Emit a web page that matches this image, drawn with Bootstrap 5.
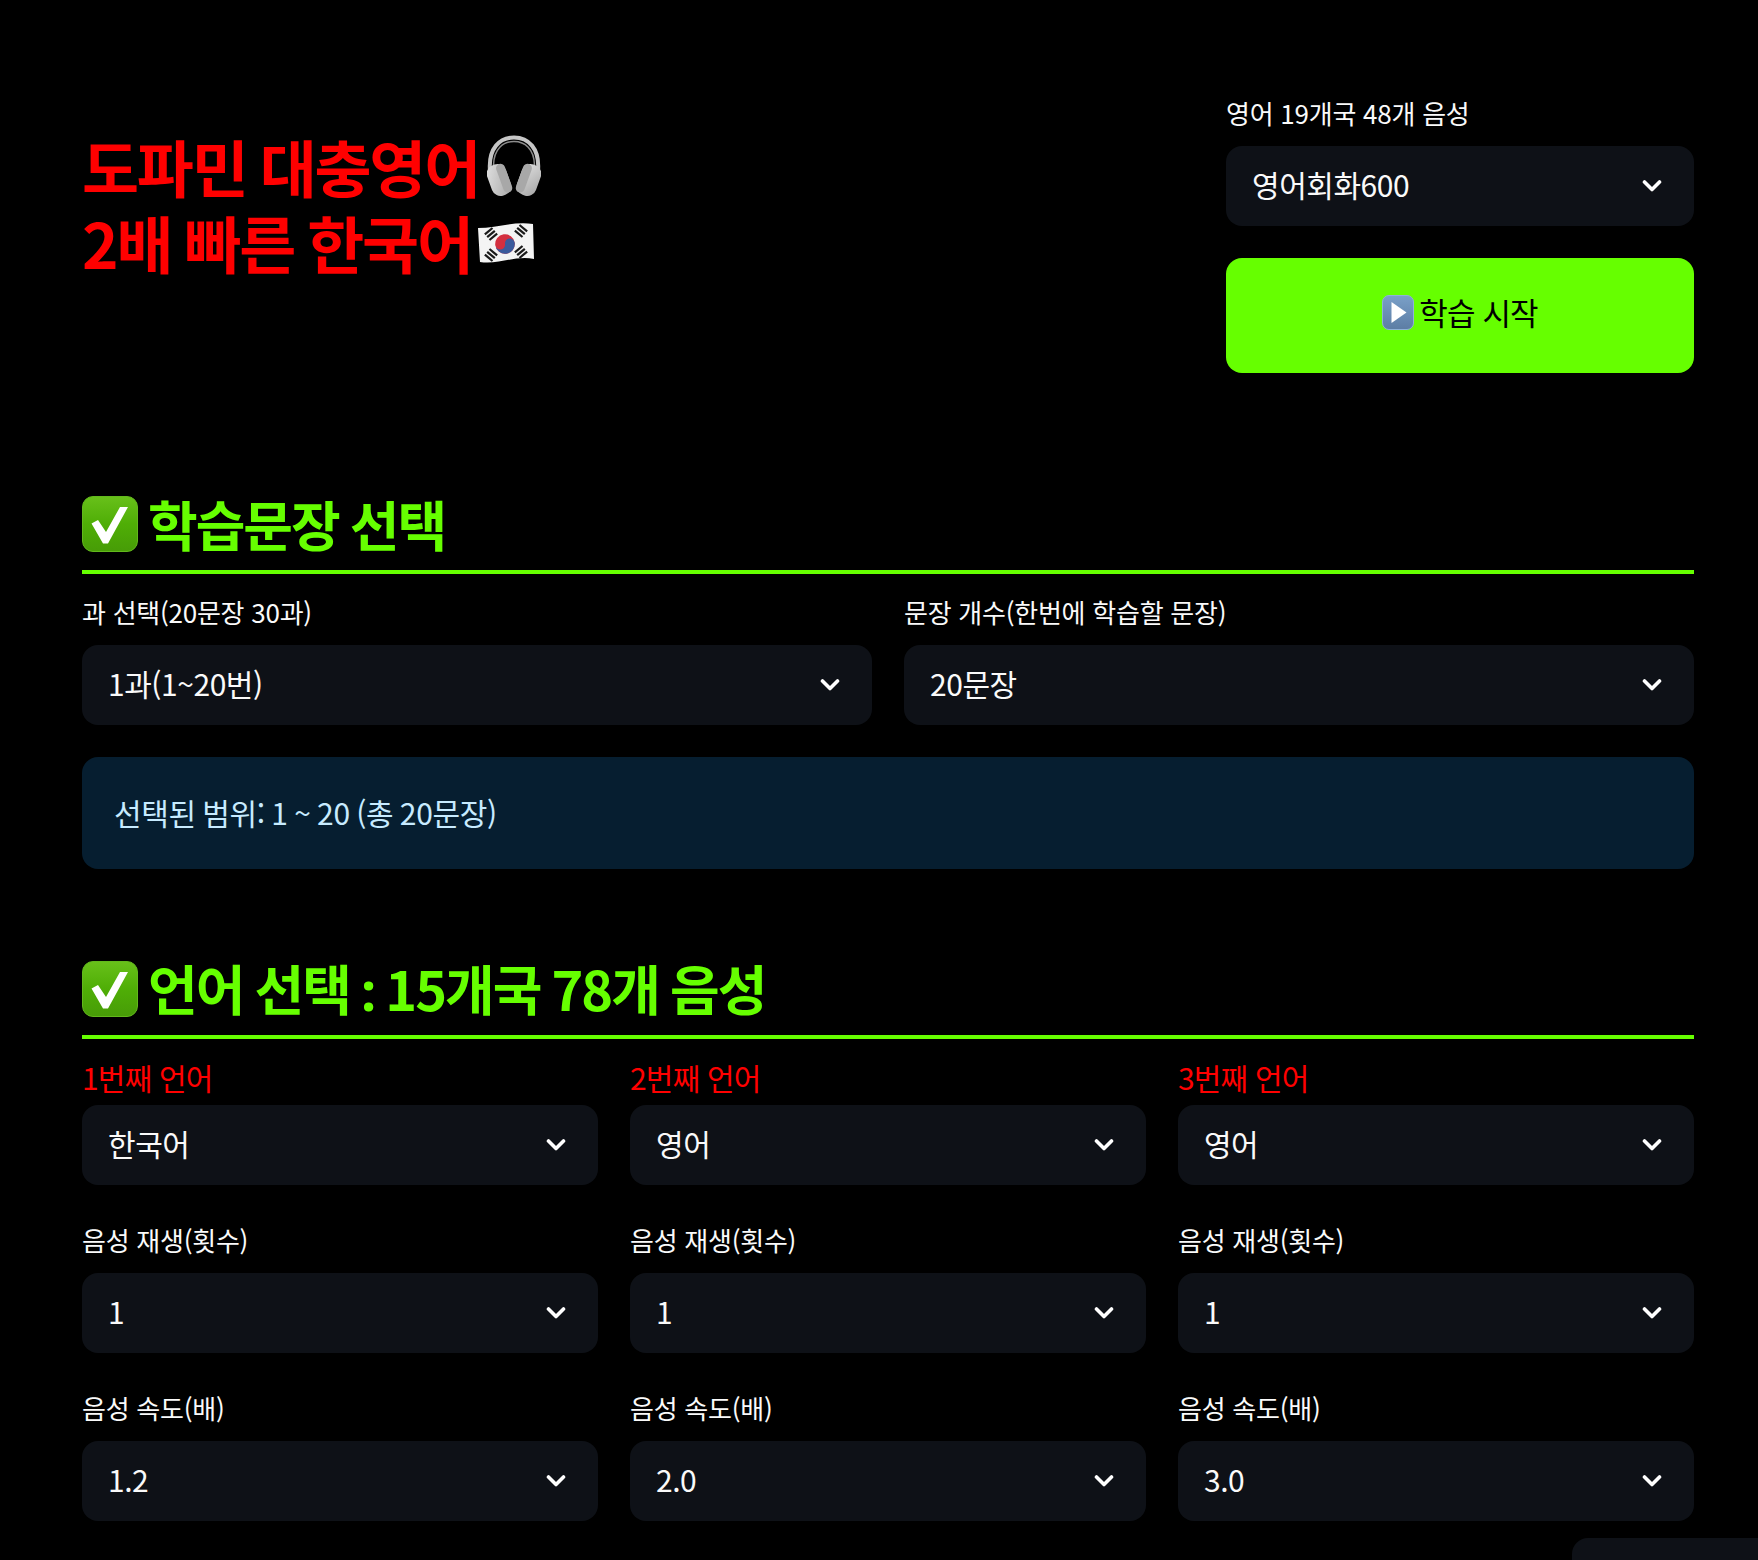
<!DOCTYPE html>
<html lang="ko">
<head>
<meta charset="utf-8">
<title>도파민 대충영어</title>
<link href="https://cdn.jsdelivr.net/npm/bootstrap@5.3.0/dist/css/bootstrap.min.css" rel="stylesheet">
<style>
html,body{height:1560px;overflow:hidden;background:#000;}
body{font-family:"Noto Sans CJK KR","Noto Sans",sans-serif;color:#fafafa;position:relative;}
.page-wrap{padding:0 64px 0 82px;}
.hero-row{height:488px;}
.hero-title{font-size:62px;font-weight:700;line-height:76px;color:#f00;letter-spacing:-2.2px;word-spacing:-2px;margin:0;padding-top:128px;}
.hero-side{width:468px;flex:none;padding-top:94px;}
.emo-phones{display:inline-block;vertical-align:-3px;margin-left:8px;}
.emo-flag{display:inline-block;vertical-align:6px;margin-left:6px;margin-top:-8px;}
.fld-label{display:block;font-size:26px;line-height:38px;margin:0 0 14px;letter-spacing:-.25px;color:#fafafa;}
.fld-label.red{color:#f00;font-size:30px;letter-spacing:-.8px;line-height:44px;margin-bottom:6px;}
.fld-select.form-select{height:80px;background-color:#0e1117;border:0;border-radius:16px;color:#fafafa;font-size:30px;letter-spacing:-.45px;padding:0 70px 4px 26px;
background-image:url("data:image/svg+xml,%3Csvg xmlns='http://www.w3.org/2000/svg' viewBox='0 0 20 14'%3E%3Cpath d='M2.5 3l7.5 7.5L17.500 3' fill='none' stroke='white' stroke-width='3.600' stroke-linecap='round' stroke-linejoin='round'/%3E%3C/svg%3E");
background-size:20px 14px;background-position:right 32px center;}
.start-btn.btn{display:flex;width:100%;height:115px;margin-top:32px;background:#66ff00;border:0;border-radius:16px;color:#000;font-size:31px;letter-spacing:-.9px;align-items:center;justify-content:center;gap:5px;padding:0 0 6px;}
.sec-head{font-size:54px;font-weight:700;line-height:72px;color:#66ff00;letter-spacing:-2px;word-spacing:-2px;margin:0;padding-bottom:10px;border-bottom:4px solid #66ff00;display:flex;align-items:center;gap:10px;}
.colon-latin{font-family:"Noto Sans",sans-serif;}
.row.tight{--bs-gutter-x:32px;--bs-gutter-y:0;}
.info-box{margin-top:32px;height:112px;background:#061e30;border-radius:16px;color:#c7ebff;font-size:30px;letter-spacing:-.35px;word-spacing:-1.5px;display:flex;align-items:center;padding:0 0 1px 32px;}
.sec-two{margin-top:83px;padding-bottom:9px;}
.mt-first{margin-top:19px;}
.mt-lang{margin-top:16px;}
.mt-more{margin-top:36px;}
.float-bit{position:absolute;left:1572px;top:1538px;width:186px;height:40px;background:#0e1117;border-top-left-radius:16px;}
</style>
</head>
<body>
<svg width="0" height="0" class="position-absolute"><defs>
<linearGradient id="ck1" x1="0" y1="0" x2="0" y2="1"><stop offset="0" stop-color="#68c01a"/><stop offset=".5" stop-color="#4fae06"/><stop offset="1" stop-color="#479c07"/></linearGradient>
<linearGradient id="cupg" x1="0" y1="0" x2="1" y2="1"><stop offset="0" stop-color="#e2e2e2"/><stop offset="1" stop-color="#a6a6a6"/></linearGradient>
<linearGradient id="pb" x1="0" y1="0" x2="0" y2="1"><stop offset="0" stop-color="#7aa0c8"/><stop offset="1" stop-color="#5c7da4"/></linearGradient>
<symbol id="check-box" viewBox="0 0 56 56"><rect x=".5" y=".5" width="55" height="55" rx="10.500" fill="url(#ck1)" stroke="#62b81c"/><path d="M9.500 27.500L16 24l8 12L38 11h8L26 47.500h-5z" fill="#fff"/></symbol>
</defs></svg>
<div class="page-wrap">
  <div class="hero-row d-flex justify-content-between">
    <h1 class="hero-title">도파민 대충영어<svg class="emo-phones" width="54" height="61" viewBox="0 0 54 61"><path d="M3 36C1 13 13 2.500 27 2.500S53 13 51 36" fill="none" stroke="#c6c6c6" stroke-width="4"/><path d="M6.500 30C7 14 16 6.500 27 6.500S47 14 47.500 30" fill="none" stroke="#8c8c8c" stroke-width="1.500"/><g transform="rotate(-20 12 45)"><rect x="2" y="29" width="20" height="32" rx="9" fill="url(#cupg)"/><rect x="13" y="30" width="9" height="30" rx="4.500" fill="#a8a8a8"/></g><g transform="rotate(20 42 45)"><rect x="32" y="29" width="20" height="32" rx="9" fill="url(#cupg)"/><rect x="32" y="30" width="9" height="30" rx="4.500" fill="#a8a8a8"/></g></svg><br>2배 빠른 한국어<svg class="emo-flag" width="56" height="40" viewBox="0 0 56 40"><path d="M0 5C18 5 36-2 55 1l1 35C38 32 20 42 2 39z" fill="#f4f4f4"/><g transform="rotate(-8 27 21)"><circle cx="27" cy="21" r="9.800" fill="#d32f3f"/><path d="M17.200 21a4.900 4.900 0 0 0 9.800 0a4.900 4.900 0 0 1 9.800 0a9.800 9.800 0 0 1-19.600 0z" fill="#3a5a9c"/></g><g stroke="#1a1a1a" stroke-width="2.200" fill="none"><path transform="translate(13 11) rotate(-40)" d="M-5-3.600H5M-5 0H5M-5 3.600H5"/><path transform="translate(43 8) rotate(40)" d="M-5-3.600H5M-5 0H5M-5 3.600H5"/><path transform="translate(13 32) rotate(40)" d="M-5-3.600H5M-5 0H5M-5 3.600H5"/><path transform="translate(43 29) rotate(-40)" d="M-5-3.600H5M-5 0H5M-5 3.600H5"/></g></svg></h1>
    <div class="hero-side">
      <label class="fld-label">영어 19개국 48개 음성</label>
      <select class="form-select fld-select"><option>영어회화600</option></select>
      <button class="btn start-btn" type="button"><svg width="32" height="35" viewBox="0 0 32 35"><rect x=".5" y=".5" width="31" height="34" rx="6.500" fill="url(#pb)" stroke="#8fb2d6"/><path d="M9.500 7l15 10.500-15 10.500z" fill="#fff"/></svg><span>학습 시작</span></button>
    </div>
  </div>

  <h2 class="sec-head"><svg width="56" height="56"><use href="#check-box"/></svg><span>학습문장 선택</span></h2>
  <div class="row tight mt-first">
    <div class="col-6"><label class="fld-label">과 선택(20문장 30과)</label><select class="form-select fld-select"><option>1과(1~20번)</option></select></div>
    <div class="col-6"><label class="fld-label">문장 개수(한번에 학습할 문장)</label><select class="form-select fld-select"><option>20문장</option></select></div>
  </div>
  <div class="info-box">선택된 범위: 1 ~ 20 (총 20문장)</div>

  <h2 class="sec-head sec-two"><svg width="56" height="56"><use href="#check-box"/></svg><span>언어 선택 <span class="colon-latin">:</span> 15개국 78개 음성</span></h2>
  <div class="row tight mt-lang">
    <div class="col-4"><label class="fld-label red">1번째 언어</label><select class="form-select fld-select"><option>한국어</option></select></div>
    <div class="col-4"><label class="fld-label red">2번째 언어</label><select class="form-select fld-select"><option>영어</option></select></div>
    <div class="col-4"><label class="fld-label red">3번째 언어</label><select class="form-select fld-select"><option>영어</option></select></div>
  </div>
  <div class="row tight mt-more">
    <div class="col-4"><label class="fld-label">음성 재생(횟수)</label><select class="form-select fld-select"><option>1</option></select></div>
    <div class="col-4"><label class="fld-label">음성 재생(횟수)</label><select class="form-select fld-select"><option>1</option></select></div>
    <div class="col-4"><label class="fld-label">음성 재생(횟수)</label><select class="form-select fld-select"><option>1</option></select></div>
  </div>
  <div class="row tight mt-more">
    <div class="col-4"><label class="fld-label">음성 속도(배)</label><select class="form-select fld-select"><option>1.2</option></select></div>
    <div class="col-4"><label class="fld-label">음성 속도(배)</label><select class="form-select fld-select"><option>2.0</option></select></div>
    <div class="col-4"><label class="fld-label">음성 속도(배)</label><select class="form-select fld-select"><option>3.0</option></select></div>
  </div>
</div>
<div class="float-bit"></div>
<script src="https://cdn.jsdelivr.net/npm/bootstrap@5.3.0/dist/js/bootstrap.bundle.min.js"></script>
</body>
</html>
